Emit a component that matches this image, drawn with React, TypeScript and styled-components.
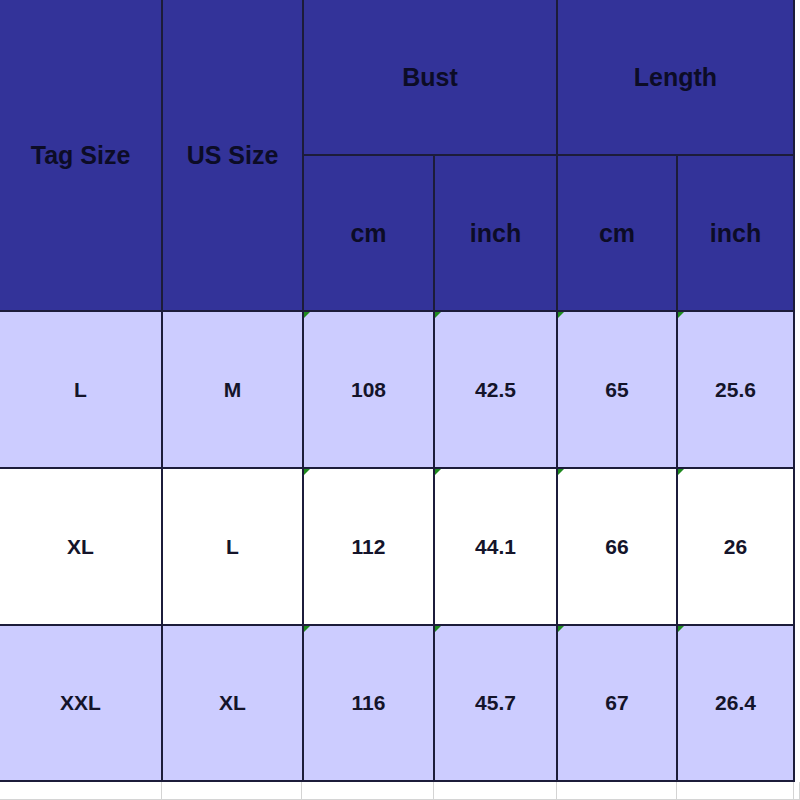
import styled, { createGlobalStyle } from 'styled-components'

const GlobalStyle = createGlobalStyle`
  html, body {
    margin: 0;
    padding: 0;
    background: #ffffff;
    overflow: hidden;
  }
`

const columns = '161px 139px 129px 121px 118px 115px'

const rows = [
  { tag: 'L', us: 'M', bustCm: '108', bustIn: '42.5', lenCm: '65', lenIn: '25.6', shaded: true },
  { tag: 'XL', us: 'L', bustCm: '112', bustIn: '44.1', lenCm: '66', lenIn: '26', shaded: false },
  { tag: 'XXL', us: 'XL', bustCm: '116', bustIn: '45.7', lenCm: '67', lenIn: '26.4', shaded: true },
]

export default function App() {
  return (
    <>
      <GlobalStyle />
      <Sheet>
        <SizeTable>
          <HeadCell $row="1 / span 2" $col="1">Tag Size</HeadCell>
          <HeadCell $row="1 / span 2" $col="2">US Size</HeadCell>
          <HeadCell $row="1" $col="3 / span 2">Bust</HeadCell>
          <HeadCell $row="1" $col="5 / span 2">Length</HeadCell>
          <HeadCell $row="2" $col="3">cm</HeadCell>
          <HeadCell $row="2" $col="4">inch</HeadCell>
          <HeadCell $row="2" $col="5">cm</HeadCell>
          <HeadCell $row="2" $col="6">inch</HeadCell>
          {rows.flatMap((r) => [
            <DataCell key={r.tag + 'a'} $shaded={r.shaded}>{r.tag}</DataCell>,
            <DataCell key={r.tag + 'b'} $shaded={r.shaded}>{r.us}</DataCell>,
            <DataCell key={r.tag + 'c'} $shaded={r.shaded} $marked>{r.bustCm}</DataCell>,
            <DataCell key={r.tag + 'd'} $shaded={r.shaded} $marked>{r.bustIn}</DataCell>,
            <DataCell key={r.tag + 'e'} $shaded={r.shaded} $marked>{r.lenCm}</DataCell>,
            <DataCell key={r.tag + 'f'} $shaded={r.shaded} $marked>{r.lenIn}</DataCell>,
          ])}
        </SizeTable>
        <GridFiller>
          {Array.from({ length: 7 }).map((_, i) => (
            <FillerCell key={i} />
          ))}
        </GridFiller>
      </Sheet>
    </>
  )
}

const Sheet = styled.div`
  width: 800px;
  height: 800px;
  overflow: hidden;
  display: flex;
  flex-direction: column;
  font-family: 'Liberation Sans', Arial, sans-serif;
`

const SizeTable = styled.div`
  display: grid;
  grid-template-columns: ${columns};
  grid-template-rows: 154px 154px 155px 155px 154px;
  gap: 2px;
  width: max-content;
  padding: 0 2px 2px 0;
  background: #1c1c3a;
  position: relative;
`

const Cell = styled.div`
  display: flex;
  align-items: center;
  justify-content: center;
  font-weight: 700;
  position: relative;
`

const HeadCell = styled(Cell)<{ $row: string; $col: string }>`
  grid-row: ${(p) => p.$row};
  grid-column: ${(p) => p.$col};
  background: #333399;
  color: #0c0c26;
  font-size: 25px;
`

const DataCell = styled(Cell)<{ $shaded: boolean; $marked?: boolean }>`
  background: ${(p) => (p.$shaded ? '#ccccff' : '#ffffff')};
  color: #14142a;
  font-size: 21px;

  ${(p) =>
    p.$marked &&
    `
    &::before {
      content: '';
      position: absolute;
      top: 0;
      left: 0;
      border-top: 6px solid #1f8a1f;
      border-right: 6px solid transparent;
    }
  `}
`

const GridFiller = styled.div`
  display: grid;
  grid-template-columns: 162px 140px 132px 123px 120px 117px 1fr;
  flex: 1;
`

const FillerCell = styled.div`
  border-right: 1px solid #d4d4d4;
  border-bottom: 1px solid #d4d4d4;
`
